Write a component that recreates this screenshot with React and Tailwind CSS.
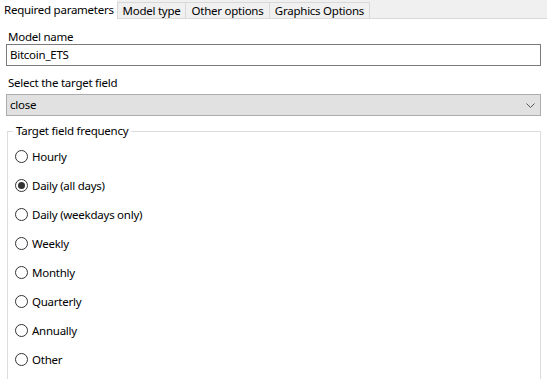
import React from "react";

const options = [
  "Hourly",
  "Daily (all days)",
  "Daily (weekdays only)",
  "Weekly",
  "Monthly",
  "Quarterly",
  "Annually",
  "Other",
];

function Radio({ checked }) {
  return (
    <span className="relative flex h-[13px] w-[13px] shrink-0 items-center justify-center rounded-full border border-[#333333] bg-white">
      {checked && <span className="h-[7px] w-[7px] rounded-full bg-[#333333]" />}
    </span>
  );
}

export default function App() {
  return (
    <div
      className="h-[379px] w-[547px] overflow-hidden whitespace-nowrap bg-white text-[11.5px] tracking-[-0.25px] text-black"
      style={{ fontFamily: '"Noto Sans", "Open Sans", sans-serif' }}
    >
      {/* tab strip */}
      <div className="flex h-[19px] border-b border-[#d9d9d9] bg-[#f0f0f0]">
        <div className="-mb-px flex h-[19px] w-[117px] items-center bg-white pl-[4px] leading-none">
          Required parameters
        </div>
        <div className="mt-[2px] flex h-[17px] w-[69px] items-center justify-center border-x border-t border-[#d9d9d9] leading-none">
          Model type
        </div>
        <div className="mt-[2px] flex h-[17px] w-[84px] items-center justify-center border-r border-t border-[#d9d9d9] leading-none">
          Other options
        </div>
        <div className="mt-[2px] flex h-[17px] w-[100px] items-center justify-center border-r border-t border-[#d9d9d9] leading-none">
          Graphics Options
        </div>
      </div>

      <div className="flex flex-col pl-[6px] pr-[6px]">
        <div className="mt-[11px] h-[14px] pl-[2px] leading-[14px]">Model name</div>
        <div className="flex h-[22px] items-center border border-[#7a7a7a] pl-[3px]">Bitcoin_ETS</div>

        <div className="mt-[10px] h-[14px] pl-[2px] leading-[14px]">Select the target field</div>
        <div className="mt-[4px] flex h-[22px] items-center justify-between border border-[#adadad] bg-[#e1e1e1] pl-[3px] pr-[5px]">
          <span>close</span>
          <svg width="9" height="5" viewBox="0 0 9 5" className="mt-[1px]">
            <path d="M0.5 0.5 L4.5 4.5 L8.5 0.5" fill="none" stroke="#555" strokeWidth="1" />
          </svg>
        </div>

        <div className="relative ml-px mt-[15px] h-[260px] border border-[#dcdcdc] pt-[10px]">
          <div className="absolute -top-[8px] left-[5px] bg-white px-[3px] leading-[14px]">
            Target field frequency
          </div>
          <div className="flex flex-col pl-[7px]">
            {options.map((o, i) => (
              <div key={o} className="flex h-[29px] items-center gap-[4px]">
                <Radio checked={i === 1} />
                <span className="leading-none">{o}</span>
              </div>
            ))}
          </div>
        </div>
      </div>
    </div>
  );
}
